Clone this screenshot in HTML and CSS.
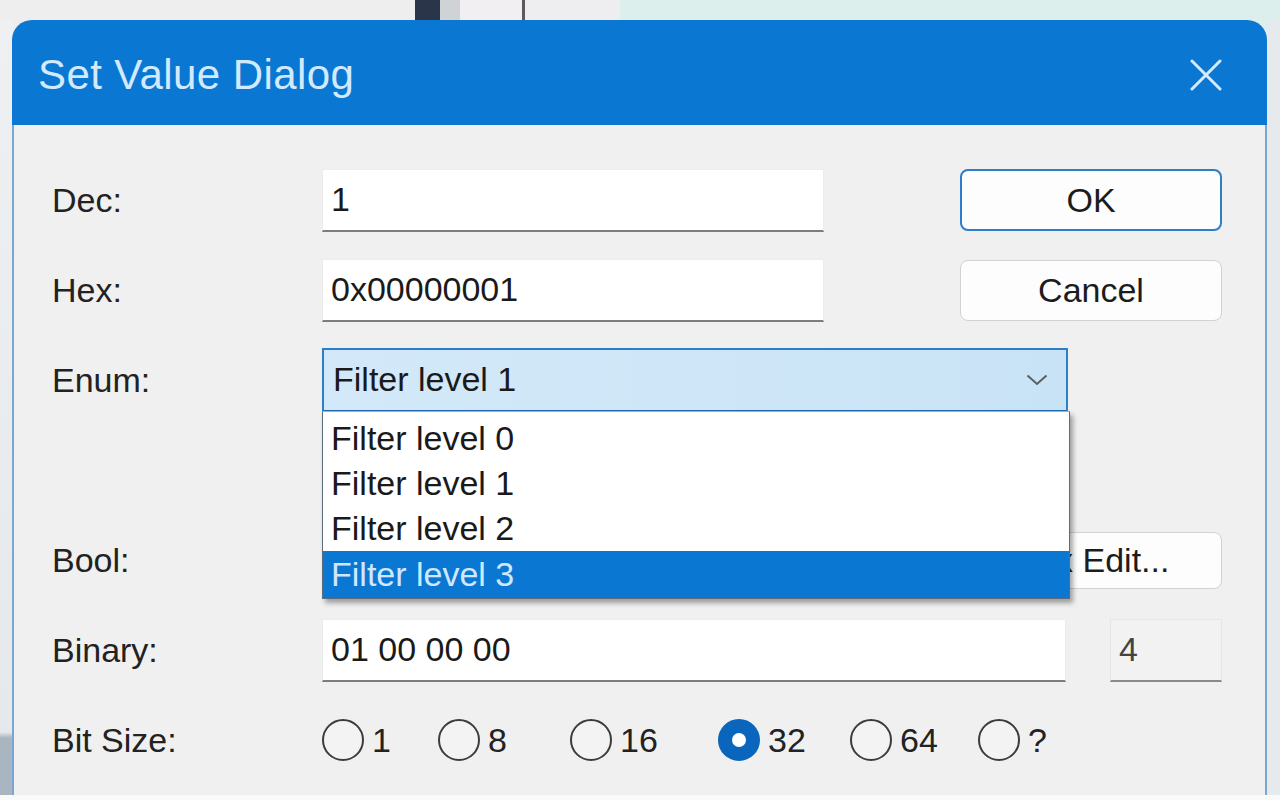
FILE: index.html
```html
<!DOCTYPE html>
<html lang="en">
<head>
<meta charset="utf-8">
<title>Set Value Dialog</title>
<link rel="stylesheet" href="styles.css">
</head>
<body>
<div class="desktop">
  <div class="edge edge-left"></div>
  <div class="dialog">
    <div class="titlebar">
      <span class="title">Set Value Dialog</span>
      <svg class="close" width="32" height="32" viewBox="0 0 32 32" aria-hidden="true">
        <path d="M2 2 L30 30 M30 2 L2 30" stroke="#d6ebff" stroke-width="3" fill="none" stroke-linecap="round"/>
      </svg>
    </div>
    <div class="content">
      <div class="row">
        <span class="label">Dec:</span>
        <div class="field field-short">1</div>
        <button class="btn btn-default">OK</button>
      </div>
      <div class="row">
        <span class="label">Hex:</span>
        <div class="field field-short">0x00000001</div>
        <button class="btn">Cancel</button>
      </div>
      <div class="row">
        <span class="label">Enum:</span>
        <div class="combo">
          <span>Filter level 1</span>
          <svg class="chevron" width="22" height="12" viewBox="0 0 22 12" aria-hidden="true">
            <path d="M1.5 1.5 L11 10 L20.5 1.5" stroke="#5a5f66" stroke-width="2" fill="none"/>
          </svg>
          <ul class="list">
            <li class="item">Filter level 0</li>
            <li class="item">Filter level 1</li>
            <li class="item">Filter level 2</li>
            <li class="item item-selected">Filter level 3</li>
          </ul>
        </div>
      </div>
      <div class="row"></div>
      <div class="row">
        <span class="label">Bool:</span>
        <button class="btn btn-short">Hex Edit...</button>
      </div>
      <div class="row">
        <span class="label">Binary:</span>
        <div class="field field-long">01 00 00 00</div>
        <div class="field field-small">4</div>
      </div>
      <div class="row">
        <span class="label">Bit Size:</span>
        <div class="radios">
          <label class="radio"><span class="dot"></span>1</label>
          <label class="radio"><span class="dot"></span>8</label>
          <label class="radio"><span class="dot"></span>16</label>
          <label class="radio"><span class="dot dot-checked"></span>32</label>
          <label class="radio"><span class="dot"></span>64</label>
          <label class="radio"><span class="dot"></span>?</label>
        </div>
      </div>
    </div>
  </div>
  <div class="edge edge-right"></div>
</div>
</body>
</html>
```

FILE: styles.css
```css
* { box-sizing: border-box; }

html, body {
  margin: 0;
  padding: 0;
  width: 1280px;
  height: 800px;
  overflow: hidden;
}

body {
  background: #fafafa;
  font-family: "Liberation Sans", Arial, sans-serif;
  color: #1c1c1c;
}

.desktop {
  display: flex;
  align-items: stretch;
  height: 795px;
  padding-top: 20px;
  background:
    linear-gradient(to right,
      #eeeeee 0, #eeeeee 415px,
      #2b3549 415px, #2b3549 440px,
      #cfd3d6 440px, #cfd3d6 460px,
      #f1eff1 460px, #f1eff1 522px,
      #5a5a5a 522px, #5a5a5a 525px,
      #eeedf0 525px, #eeedf0 620px,
      #dcefed 620px, #dcefed 100%) top left / 100% 40px no-repeat,
    #ebeef0;
}

.edge { flex: none; }
.edge-left {
  width: 12px;
  background: linear-gradient(to bottom, #eef0f2 0, #e6e9ec 712px, #a9b5c1 718px, #a9b5c1 100%);
}
.edge-right {
  width: 13px;
  background: #e7eaec;
}

.dialog {
  width: 1255px;
  flex: none;
  display: flex;
  flex-direction: column;
  border-radius: 20px 20px 0 0;
}

.titlebar {
  height: 105px;
  flex: none;
  background: #0a78d3;
  border-radius: 20px 20px 0 0;
  display: flex;
  align-items: center;
  justify-content: space-between;
  padding: 4px 45px 0 26px;
}

.title {
  font-size: 42px;
  color: #d2eaff;
  letter-spacing: 0.4px;
}

.close { display: block; }

.content {
  flex: 1;
  background: #f0f0f0;
  border-left: 2px solid #7aa6d2;
  border-right: 2px solid #7aa6d2;
  padding: 43px 43px 0 38px;
  display: flex;
  flex-direction: column;
  gap: 26px;
}

.row {
  height: 64px;
  display: flex;
  align-items: center;
  font-size: 34px;
}

.label {
  width: 270px;
  flex: none;
  color: #222;
}

.field {
  height: 63px;
  background: #ffffff;
  border: 1px solid #ececec;
  border-bottom: 2px solid #7d7d7d;
  padding-left: 8px;
  display: flex;
  align-items: center;
  color: #1a1a1a;
}

.field-short { width: 502px; }
.field-long { width: 744px; }
.field-small {
  width: 112px;
  margin-left: auto;
  background: #f2f2f2;
  border-color: #e6e6e6;
  border-bottom-color: #8a8a8a;
  color: #444;
}

.btn {
  margin-left: auto;
  width: 262px;
  height: 61px;
  border: 1px solid #d2d2d2;
  border-radius: 8px;
  background: #fdfdfd;
  font-family: inherit;
  font-size: 34px;
  color: #1c1c1c;
  padding: 0;
}

.btn-default {
  height: 62px;
  border: 2px solid #2f7cc8;
}

.btn-short { height: 57px; }

.combo {
  position: relative;
  width: 746px;
  height: 65px;
  background: linear-gradient(to right, #d3e9f9, #c9e3f6);
  border: 2px solid #2d7ec8;
  border-bottom: 3px solid #1d6cb4;
  padding: 0 18px 0 9px;
  display: flex;
  align-items: center;
  justify-content: space-between;
  color: #1a1a1a;
}

.chevron { display: block; }

.list {
  position: absolute;
  top: calc(100% + 1px);
  left: -2px;
  width: 748px;
  margin: 0;
  padding: 4px 0 0;
  list-style: none;
  background: #ffffff;
  border: 1px solid #5c6c7c;
  border-top-color: #8fb4d8;
  box-shadow: 3px 4px 5px rgba(0, 0, 0, 0.35);
  z-index: 10;
}

.item {
  height: 45px;
  padding-left: 8px;
  display: flex;
  align-items: center;
  color: #1a1a1a;
}

.item-selected {
  height: 47px;
  background: #0a78d3;
  color: #cfe8ff;
}

.radios {
  display: grid;
  grid-template-columns: 116px 132px 148px 132px 128px auto;
  align-items: center;
}

.radio {
  display: flex;
  align-items: center;
  gap: 8px;
  color: #222;
}

.dot {
  width: 42px;
  height: 42px;
  border-radius: 50%;
  border: 2px solid #3c3c3c;
  background: #f3f3f3;
  display: flex;
  align-items: center;
  justify-content: center;
}

.dot-checked {
  background: #0a66bd;
  border-color: #0a66bd;
}

.dot-checked::after {
  content: "";
  width: 14px;
  height: 14px;
  border-radius: 50%;
  background: #ffffff;
}
```
